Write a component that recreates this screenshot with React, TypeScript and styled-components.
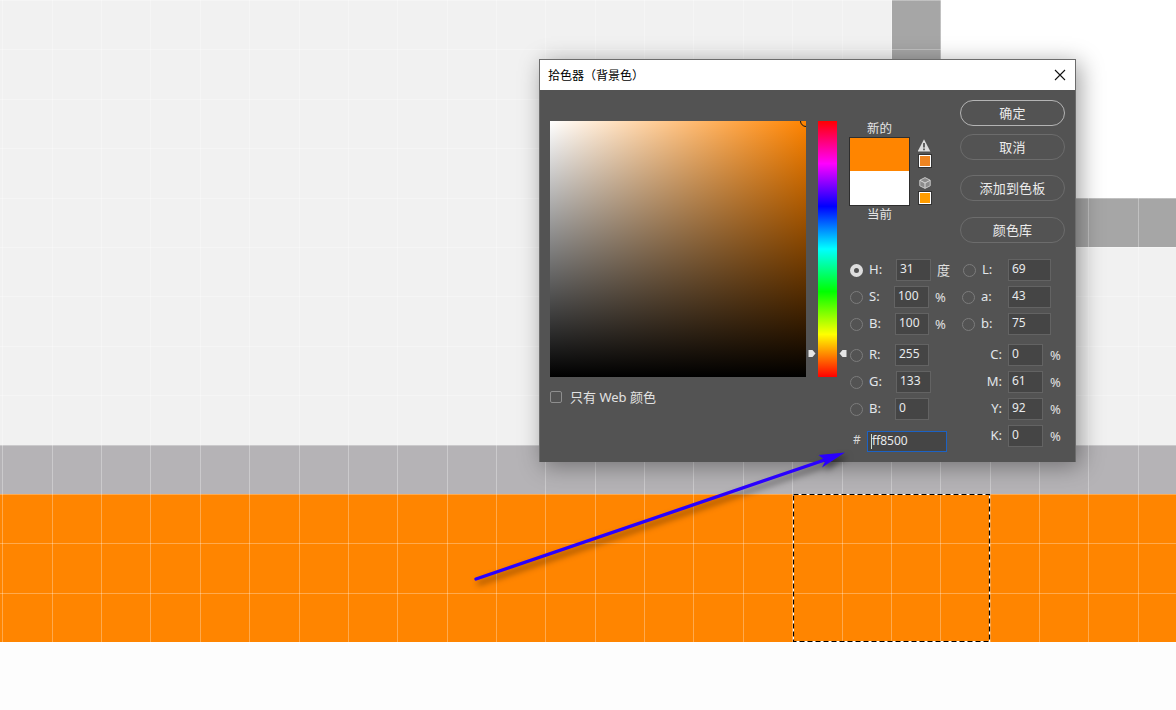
import React from "react";
import styled, { createGlobalStyle } from "styled-components";

const Global = createGlobalStyle`
  html, body { margin: 0; padding: 0; overflow: hidden; background: #fdfdfd; }
  * { box-sizing: border-box; }
`;

const Page = styled.div`
  position: relative;
  width: 1176px;
  height: 710px;
  overflow: hidden;
  font-family: "Noto Sans", "Noto Sans CJK SC", sans-serif;
  display: flex;
  flex-direction: column;
`;

const TopBand = styled.div`
  height: 445px;
  background: #f1f1f1;
  display: flex;
  flex-direction: column;
`;
const CellRow = styled.div<{ $h: number }>`
  height: ${(p) => p.$h}px;
  display: flex;
`;
const Cell = styled.div<{ $w?: number; $bg: string }>`
  ${(p) => (p.$w ? `width: ${p.$w}px;` : "flex: 1;")}
  background: ${(p) => p.$bg};
`;
const Band = styled.div<{ $h: number; $bg: string }>`
  height: ${(p) => p.$h}px;
  background: ${(p) => p.$bg};
`;

const GridLines = styled.div`
  position: absolute;
  left: 0;
  top: 0;
  width: 1176px;
  height: 643px;
  pointer-events: none;
  background-image:
    repeating-linear-gradient(90deg, transparent 0 2.3px, rgba(255,255,255,.3) 2.3px 3.3px, transparent 3.3px 49.37px),
    repeating-linear-gradient(180deg, rgba(255,255,255,.3) 0 1px, transparent 1px 49.4px);
`;

const Marquee = styled.svg`
  position: absolute;
  left: 793px;
  top: 494px;
`;

const Dialog = styled.div`
  position: absolute;
  left: 539px;
  top: 59px;
  width: 537px;
  height: 403px;
  border: 1px solid #6c6c6c;
  border-bottom: 0;
  background: #535353;
  box-shadow: 4px 4px 22px rgba(0, 0, 0, 0.38);
  display: flex;
  flex-direction: column;
`;
const TitleBar = styled.div`
  height: 30px;
  flex: none;
  background: #fff;
  display: flex;
  align-items: center;
  justify-content: space-between;
  padding: 0 9px 0 8px;
  color: #000;
  font-size: 12px;
`;
const CloseIcon = styled.svg`
  display: block;
`;
const Body = styled.div`
  flex: 1;
  display: flex;
  padding-left: 10px;
  color: #e4e4e4;
  font-size: 12px;
`;
const PickerCol = styled.div`
  width: 256px;
  padding-top: 31px;
`;
const ColorField = styled.div`
  position: relative;
  width: 256px;
  height: 256px;
  overflow: hidden;
  background:
    linear-gradient(to top, #000, rgba(0, 0, 0, 0)),
    linear-gradient(to right, #fff, #ff8400);
`;
const FieldCursor = styled.div`
  position: absolute;
  left: 250px;
  top: -6px;
  width: 12px;
  height: 12px;
  border: 1px solid #111;
  border-radius: 50%;
`;
const WebRow = styled.div`
  margin-top: 14px;
  display: flex;
  align-items: center;
  height: 12px;
  gap: 8px;
  color: #e2e2e2;
  font-size: 13px;
`;
const WebText = styled.span`
  padding-bottom: 2px;
`;
const CheckBox = styled.div`
  width: 12px;
  height: 12px;
  border: 1px solid #8e8e8e;
  border-radius: 2px;
`;
const HueCol = styled.div`
  position: relative;
  margin: 31px 0 0 12px;
  width: 19px;
  height: 256px;
  background: linear-gradient(
    to bottom,
    #f00 0%,
    #f0f 16.66%,
    #00f 33.33%,
    #0ff 50%,
    #0f0 66.66%,
    #ff0 83.33%,
    #f00 100%
  );
`;
const HueHandle = styled.svg<{ $side: "l" | "r" }>`
  position: absolute;
  top: 228px;
  ${(p) => (p.$side === "l" ? "left: -10px;" : "right: -10px;")}
`;
const RightCol = styled.div`
  margin-left: 12px;
  width: 216px;
  display: flex;
  flex-direction: column;
`;
const TopArea = styled.div`
  height: 169px;
  display: flex;
`;
const PreviewCol = styled.div`
  width: 61px;
  padding-top: 31px;
  text-align: center;
  line-height: 16px;
  font-size: 12.5px;
`;
const PreviewBox = styled.div`
  height: 69px;
  margin-bottom: 1px;
  border: 1px solid #2e2e2e;
  display: flex;
  flex-direction: column;
`;
const PreviewPart = styled.div<{ $bg: string; $h: number }>`
  height: ${(p) => p.$h}px;
  background: ${(p) => p.$bg};
`;
const GamutCol = styled.div`
  margin-left: 8px;
  width: 14px;
  padding-top: 49px;
  display: flex;
  flex-direction: column;
  align-items: flex-start;
`;
const TinySwatch = styled.div<{ $bg: string; $mt: number; $mb: number }>`
  width: 14px;
  height: 14px;
  margin-top: ${(p) => p.$mt}px;
  margin-bottom: ${(p) => p.$mb}px;
  background: ${(p) => p.$bg};
  border: 1px solid #fff;
  outline: 1px solid #333;
  outline-offset: -1px;
  box-shadow: inset 0 0 0 1px #fff;
`;
const GamutIcon = styled.svg<{ $left?: number }>`
  display: block;
  margin-left: ${(p) => p.$left ?? 0}px;
`;
const ButtonCol = styled.div`
  margin-left: auto;
  width: 105px;
  padding-top: 10px;
  display: flex;
  flex-direction: column;
`;
const PillButton = styled.div<{ $primary?: boolean; $top: number }>`
  height: 26px;
  margin-top: ${(p) => p.$top}px;
  padding-bottom: 2px;
  border-radius: 13px;
  border: ${(p) => (p.$primary ? "1.5px solid #b4b4b4" : "1.5px solid #6c6c6c")};
  display: flex;
  align-items: center;
  justify-content: center;
  color: #ececec;
  font-size: 13px;
  letter-spacing: 0.2px;
`;
const Fields = styled.div`
  display: flex;
`;
const FieldCol = styled.div<{ $w: number }>`
  width: ${(p) => p.$w}px;
  display: flex;
  flex-direction: column;
`;
const Row = styled.div<{ $top?: number }>`
  height: 22px;
  margin-top: ${(p) => p.$top ?? 5}px;
  display: flex;
  align-items: center;
  &:first-child { margin-top: 0; }
`;
const Radio = styled.div<{ $on?: boolean; $left?: number }>`
  width: 13px;
  height: 13px;
  flex: none;
  margin-left: ${(p) => p.$left ?? 1}px;
  border-radius: 50%;
  border: ${(p) => (p.$on ? "4px solid #dedede" : "1px solid #7c7c7c")};
  background: #535353;
`;
const FieldLabel = styled.div<{ $w: number; $left?: number; $right?: boolean }>`
  flex: none;
  width: ${(p) => p.$w}px;
  margin-left: ${(p) => p.$left ?? 6}px;
  padding-bottom: 3px;
  text-align: ${(p) => (p.$right ? "right" : "left")};
  color: #e2e6ea;
  line-height: 16px;
  font-size: 13px;
`;
const ValueBox = styled.div<{ $w: number; $left?: number }>`
  flex: none;
  width: ${(p) => p.$w}px;
  height: 22px;
  margin-left: ${(p) => p.$left ?? 0}px;
  padding-left: 3px;
  background: #454545;
  border: 1px solid #636363;
  color: #e8eaec;
  font-size: 12px;
  line-height: 18px;
`;
const Unit = styled.div<{ $left?: number; $lift?: number }>`
  flex: none;
  margin-left: ${(p) => p.$left ?? 6}px;
  padding-bottom: ${(p) => p.$lift ?? 0}px;
  color: #e0e0e0;
  font-size: 13px;
`;
const HexMark = styled.div`
  flex: none;
  width: 18px;
  padding: 0 0 4px 4px;
  color: #d8d8d8;
  font-size: 12px;
`;
const HexBox = styled.div`
  flex: none;
  width: 80px;
  height: 21px;
  padding-left: 3px;
  background: #454545;
  border: 1px solid #1c62c4;
  color: #e8eaec;
  font-size: 12px;
  line-height: 17px;
  display: flex;
`;
const Caret = styled.span`
  width: 1px;
  height: 15px;
  margin-top: 2px;
  background: #cfe0cf;
`;
const ArrowLayer = styled.svg`
  position: absolute;
  left: 0;
  top: 0;
  pointer-events: none;
  filter: drop-shadow(3px 4px 3px rgba(0, 0, 0, 0.5));
`;

type F = { n: string; v: string; on?: boolean; rl?: number; lw: number; il?: number; w: number; u?: string; lift?: number; top?: number };

const hsb: F[] = [
  { n: "H:", v: "31", on: true, lw: 21, il: 6, w: 35, u: "度", lift: 2 },
  { n: "S:", v: "100", lw: 21, il: 4, w: 35, u: "%" },
  { n: "B:", v: "100", lw: 21, il: 5, w: 34, u: "%" },
  { n: "R:", v: "255", lw: 21, il: 5, w: 34, top: 9 },
  { n: "G:", v: "133", lw: 21, il: 6, w: 35 },
  { n: "B:", v: "0", lw: 21, il: 5, w: 34 },
];
const lab: F[] = [
  { n: "L:", v: "69", rl: 1, lw: 26, w: 43 },
  { n: "a:", v: "43", lw: 27, w: 43 },
  { n: "b:", v: "75", lw: 27, w: 43 },
];
const cmyk: F[] = [
  { n: "C:", v: "0", lw: 40, w: 35, top: 9 },
  { n: "M:", v: "61", lw: 40, w: 35 },
  { n: "Y:", v: "92", lw: 40, w: 35 },
  { n: "K:", v: "0", lw: 40, w: 35 },
];

export default function App() {
  return (
    <Page>
      <Global />
      <TopBand>
        <CellRow $h={198}>
          <Cell $w={892} $bg="#f1f1f1" />
          <Cell $w={49} $bg="#a6a6a6" />
          <Cell $bg="#ffffff" />
        </CellRow>
        <CellRow $h={49}>
          <Cell $w={941} $bg="#f1f1f1" />
          <Cell $bg="#a6a6a6" />
        </CellRow>
      </TopBand>
      <Band $h={49} $bg="#b5b3b6" />
      <Band $h={148} $bg="#ff8500" />
      <Band $h={68} $bg="#fdfdfd" />
      <GridLines />
      <Marquee width="198" height="149">
        <rect x="0.5" y="0.5" width="196" height="147" fill="none" stroke="#fff" />
        <rect x="0.5" y="0.5" width="196" height="147" fill="none" stroke="#000" strokeWidth="1.2" strokeDasharray="5 3" />
      </Marquee>
      <Dialog>
        <TitleBar>
          <span>拾色器（背景色）</span>
          <CloseIcon width="12" height="12" viewBox="0 0 12 12">
            <path d="M1 1l10 10M11 1L1 11" stroke="#111" strokeWidth="1.1" fill="none" />
          </CloseIcon>
        </TitleBar>
        <Body>
          <PickerCol>
            <ColorField>
              <FieldCursor />
            </ColorField>
            <WebRow>
              <CheckBox />
              <WebText>只有 Web 颜色</WebText>
            </WebRow>
          </PickerCol>
          <HueCol>
            <HueHandle $side="l" width="8" height="9" viewBox="0 0 8 9">
              <path d="M0.5 1h4l3 3.5-3 3.5h-4z" fill="#e6e6e6" />
            </HueHandle>
            <HueHandle $side="r" width="8" height="9" viewBox="0 0 8 9">
              <path d="M7.5 1h-4l-3 3.5 3 3.5h4z" fill="#e6e6e6" />
            </HueHandle>
          </HueCol>
          <RightCol>
            <TopArea>
              <PreviewCol>
                <div>新的</div>
                <PreviewBox>
                  <PreviewPart $bg="#ff8500" $h={33} />
                  <PreviewPart $bg="#ffffff" $h={34} />
                </PreviewBox>
                <div>当前</div>
              </PreviewCol>
              <GamutCol>
                <GamutIcon width="13" height="13" viewBox="0 0 13 13">
                  <path d="M6 0.2L12.4 12.6H-0.4z" fill="#dcdcdc" />
                  <path d="M5.2 4h1.6v4.6H5.2zM5.2 9.6h1.6v1.6H5.2z" fill="#444" />
                </GamutIcon>
                <TinySwatch $bg="#ee8522" $mt={2} $mb={9} />
                <GamutIcon $left={1} width="12" height="12" viewBox="0 0 12 12">
                  <path d="M6 0.6L11.2 3.2V8.8L6 11.4 0.8 8.8V3.2z" fill="#8c8c8c" stroke="#c8c8c8" strokeWidth="1" />
                  <path d="M1 3.4L6 6 11 3.4M6 6V11.2" fill="none" stroke="#d8d8d8" strokeWidth="1" />
                </GamutIcon>
                <TinySwatch $bg="#ff9c00" $mt={2} $mb={0} />
              </GamutCol>
              <ButtonCol>
                <PillButton $primary $top={0}>确定</PillButton>
                <PillButton $top={8}>取消</PillButton>
                <PillButton $top={15}>添加到色板</PillButton>
                <PillButton $top={16}>颜色库</PillButton>
              </ButtonCol>
            </TopArea>
            <Fields>
              <FieldCol $w={113}>
                {hsb.map((f) => (
                  <Row key={f.n + f.v} $top={f.top}>
                    <Radio $on={f.on} />
                    <FieldLabel $w={f.lw}>{f.n}</FieldLabel>
                    <ValueBox $w={f.w} $left={f.il}>{f.v}</ValueBox>
                    {f.u && <Unit $lift={f.lift}>{f.u}</Unit>}
                  </Row>
                ))}
                <Row $top={10}>
                  <HexMark>#</HexMark>
                  <HexBox>
                    <Caret />
                    <span>ff8500</span>
                  </HexBox>
                </Row>
              </FieldCol>
              <FieldCol $w={103}>
                {lab.map((f) => (
                  <Row key={f.n} $top={f.top}>
                    <Radio $left={f.rl ?? 0} />
                    <FieldLabel $w={f.lw}>{f.n}</FieldLabel>
                    <ValueBox $w={f.w}>{f.v}</ValueBox>
                  </Row>
                ))}
                {cmyk.map((f) => (
                  <Row key={f.n} $top={f.top}>
                    <FieldLabel $w={f.lw} $left={0} $right>{f.n}</FieldLabel>
                    <ValueBox $w={f.w} $left={6}>{f.v}</ValueBox>
                    <Unit $left={7}>%</Unit>
                  </Row>
                ))}
              </FieldCol>
            </Fields>
          </RightCol>
        </Body>
      </Dialog>
      <ArrowLayer width="1176" height="710" viewBox="0 0 1176 710">
        <path d="M476 579L832 457.5" stroke="#2a00ff" strokeWidth="3.4" strokeLinecap="round" fill="none" />
        <path d="M845 452.6L818.5 455 825.5 460.8 822 467.5z" fill="#2a00ff" />
      </ArrowLayer>
    </Page>
  );
}
